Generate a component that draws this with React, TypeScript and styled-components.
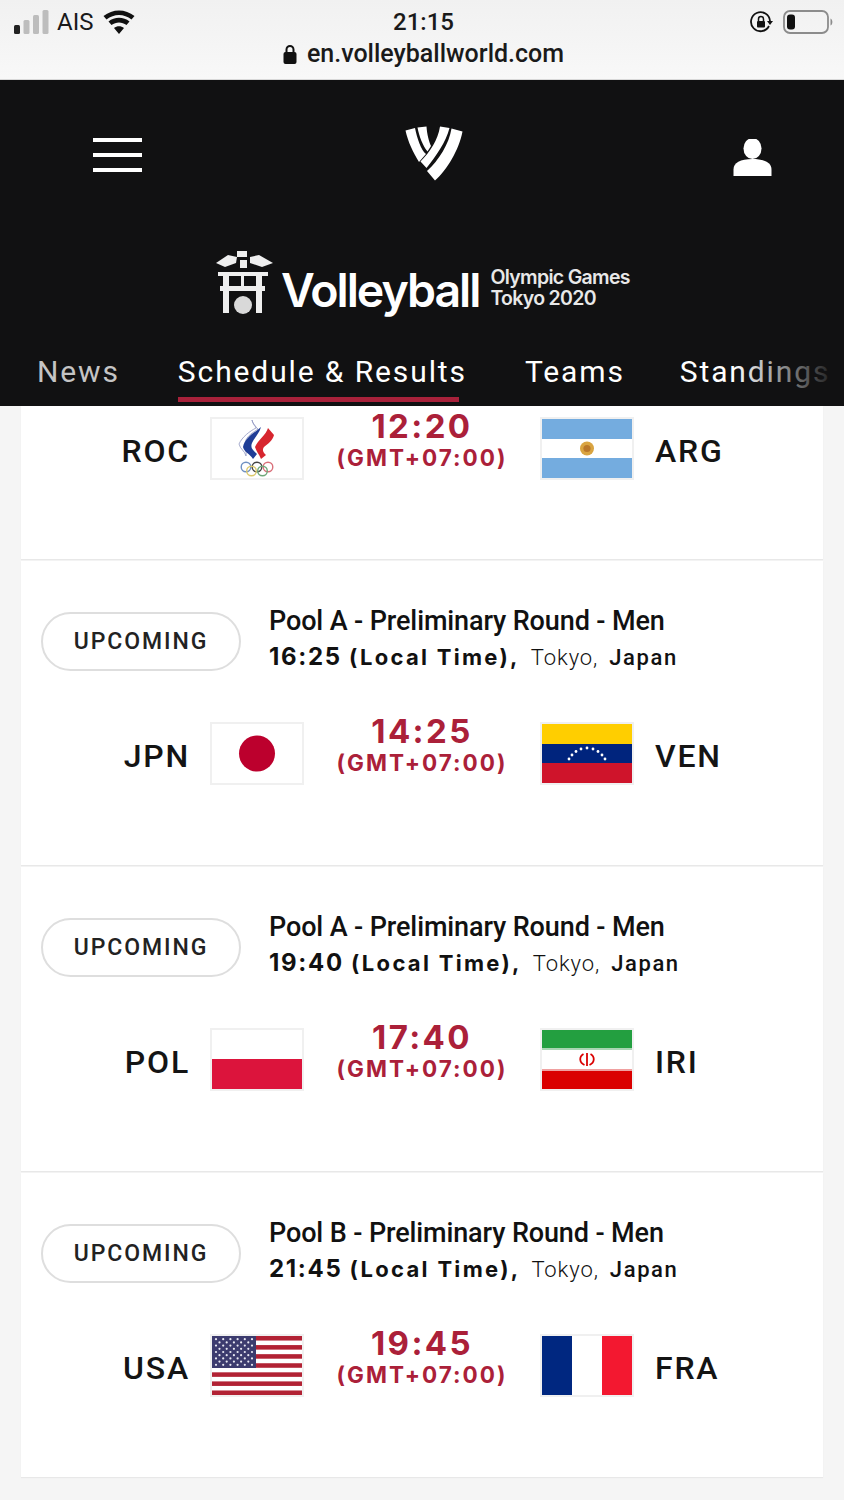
import styled, { createGlobalStyle } from 'styled-components';

const GlobalStyle = createGlobalStyle`
  html, body {
    margin: 0;
    padding: 0;
    background: #f5f5f5;
  }
  * {
    box-sizing: border-box;
  }
`;

const Page = styled.div`
  width: 844px;
  height: 1500px;
  overflow: hidden;
  background: #f5f5f5;
  font-family: Inter, "Liberation Sans", sans-serif;
`;

const StatusBar = styled.div`
  height: 80px;
  background: linear-gradient(#f1f1f1, #f8f8f8);
  border-bottom: 1px solid #d8d8d8;
  padding: 8px 11px 0 14px;
  color: #1a1a1a;
`;

const StatusRow = styled.div`
  display: grid;
  grid-template-columns: 1fr auto 1fr;
  align-items: center;
  height: 27px;
`;

const Carrier = styled.div`
  display: flex;
  align-items: center;
  gap: 8px;
  font-family: Roboto, sans-serif;
  font-size: 24px;
`;

const Clock = styled.div`
  font-family: Roboto, sans-serif;
  font-size: 24px;
  font-weight: 500;
`;

const StatusRight = styled.div`
  display: flex;
  justify-content: flex-end;
  align-items: center;
  gap: 10px;
`;

const UrlRow = styled.div`
  display: flex;
  justify-content: center;
  align-items: center;
  gap: 10px;
  margin-top: 4px;
  font-family: Roboto, sans-serif;
  font-size: 25px;
  font-weight: 500;
`;

const Header = styled.header`
  height: 326px;
  background: #111112;
  color: #fff;
  display: flex;
  flex-direction: column;
`;

const TopNav = styled.div`
  display: flex;
  justify-content: space-between;
  align-items: center;
  height: 101px;
  margin-top: 24px;
  padding: 0 72px 0 93px;
`;

const Burger = styled.div`
  width: 49px;
  display: flex;
  flex-direction: column;
  gap: 11px;
`;

const BurgerLine = styled.span`
  display: block;
  height: 4px;
  background: #fff;
`;

const LogoMark = styled.svg`
  margin-left: -6px;
`;

const UserIcon = styled.svg`
  margin-top: 6px;
`;

const Brand = styled.div`
  display: flex;
  align-items: center;
  margin-top: 40px;
  height: 75px;
  padding-left: 210px;
`;

const BrandName = styled.span`
  font-size: 46.5px;
  font-weight: 600;
  letter-spacing: -2px;
  margin: 15px 0 0 1px;
`;

const BrandSub = styled.span`
  display: flex;
  flex-direction: column;
  margin: 11px 0 0 11px;
  font-size: 19.5px;
  font-weight: 600;
  line-height: 21px;
  letter-spacing: -0.7px;
  color: #e8e8e8;
`;

const Tabs = styled.nav`
  position: relative;
  display: flex;
  gap: 58px;
  margin-top: 30px;
  padding-left: 37px;
  overflow: hidden;
  white-space: nowrap;
  flex: 1;
  &::after {
    content: '';
    position: absolute;
    top: 0;
    right: 0;
    bottom: 0;
    width: 110px;
    background: linear-gradient(to right, rgba(17, 17, 18, 0), #111112 95%);
  }
`;

const Tab = styled.div<{ $active?: boolean; $dim?: boolean }>`
  position: relative;
  font-family: Roboto, sans-serif;
  font-size: 30px;
  letter-spacing: 1.88px;
  height: 52px;
  line-height: 43px;
  color: ${p => (p.$dim ? '#c4c4c4' : '#fff')};
  &:last-child {
    margin-left: -3px;
  }
  &::after {
    content: '';
    display: ${p => (p.$active ? 'block' : 'none')};
    position: absolute;
    left: 0;
    bottom: 0;
    width: 281px;
    height: 5px;
    background: #a8213a;
  }
`;

const List = styled.main`
  display: flex;
  flex-direction: column;
  gap: 2px;
  padding: 0 21px;
`;

const Card = styled.section<{ $first?: boolean }>`
  height: ${p => (p.$first ? '153px' : '304px')};
  padding: ${p => (p.$first ? '11px 0 0' : '51px 0 0')};
  background: #fff;
  box-shadow: 0 1px 1px rgba(0, 0, 0, 0.05);
`;

const Info = styled.div`
  display: flex;
  align-items: flex-start;
  padding-left: 20px;
  margin-bottom: 46px;
`;

const Pill = styled.div`
  width: 200px;
  height: 59px;
  border: 2px solid #dedede;
  border-radius: 30px;
  display: flex;
  align-items: center;
  justify-content: center;
  font-family: Roboto, sans-serif;
  font-size: 23px;
  font-weight: 500;
  letter-spacing: 1.9px;
  color: #222;
`;

const InfoText = styled.div`
  margin: -9px 0 0 28px;
`;

const Round = styled.div`
  font-family: Roboto, sans-serif;
  font-size: 27px;
  font-weight: 500;
  line-height: 36px;
  letter-spacing: -0.12px;
  color: #111;
`;

const When = styled.div`
  display: flex;
  align-items: baseline;
  font-size: 22px;
  line-height: 36px;
  color: #111;
`;

const LocalTime = styled.b`
  font-weight: 700;
  font-size: 24px;
  letter-spacing: 1.7px;
`;

const LocalLabel = styled.b`
  font-weight: 700;
  font-size: 22px;
  letter-spacing: 2.3px;
  margin: 0 11px 0 7px;
`;

const Place = styled.span`
  font-family: Roboto, sans-serif;
  font-size: 22px;
  font-weight: 300;
  letter-spacing: 0.9px;
  margin-right: 11px;
`;

const Country = styled.span`
  font-family: Roboto, sans-serif;
  font-size: 22px;
  font-weight: 500;
  letter-spacing: 1.6px;
`;

const Match = styled.div`
  display: grid;
  grid-template-columns: 189px 94px 236px 94px 1fr;
  align-items: center;
  height: 63px;
`;

const Code = styled.div<{ $right?: boolean }>`
  font-family: Roboto, sans-serif;
  font-size: 32px;
  font-weight: 500;
  letter-spacing: 1.8px;
  color: #141414;
  text-align: ${p => (p.$right ? 'left' : 'right')};
  padding-left: ${p => (p.$right ? '21px' : '0')};
  padding-right: ${p => (p.$right ? '0' : '20px')};
  padding-top: 5px;
`;

const Flag = styled.div`
  width: 94px;
  height: 63px;
  border: 2px solid #f0f0f0;
  background: #fff;
  overflow: hidden;
`;

const FlagSvg = styled.svg`
  display: block;
  width: 100%;
  height: 100%;
`;

const Kick = styled.div`
  text-align: center;
  color: #ab2039;
  margin-top: -19px;
`;

const KickTime = styled.div`
  font-size: 33px;
  font-weight: 700;
  line-height: 36px;
  letter-spacing: 2.4px;
`;

const KickZone = styled.div`
  font-size: 22.5px;
  font-weight: 700;
  line-height: 27px;
  letter-spacing: 2px;
`;

const Russia = () => (
  <FlagSvg viewBox="0 0 90 59">
    <path d="M40 1C41 6 44 6 44 9 38 12 30 18 27 25 28 30 33 32 34 37 35 32 32 28 33 24 34 17 42 13 46 10 43 8 41 5 40 1z" fill="#fff" stroke="#8f96c0" strokeWidth="0.8" />
    <path d="M49 8C44 13 33 18 31 28 32 33 38 35 41 40L45 35C41 31 38 29 40 24 42 19 47 15 49 8z" fill="#1f3d96" />
    <path d="M62 16L56 9C54 16 46 21 43 28 44 32 47 35 49 40L54 36C51 33 50 31 52 28 56 25 61 21 62 16z" fill="#d7262f" />
    <g fill="none" strokeWidth="1.4">
      <circle cx="34" cy="48" r="4.8" stroke="#6f90c2" />
      <circle cx="45" cy="48" r="4.8" stroke="#444" />
      <circle cx="56" cy="48" r="4.8" stroke="#d9707a" />
      <circle cx="39.5" cy="52" r="4.8" stroke="#dcc96c" />
      <circle cx="50.5" cy="52" r="4.8" stroke="#6fa87a" />
    </g>
  </FlagSvg>
);

const Argentina = () => (
  <FlagSvg viewBox="0 0 90 59">
    <rect width="90" height="59" fill="#fff" />
    <rect width="90" height="20" fill="#74acdf" />
    <rect y="39" width="90" height="20" fill="#74acdf" />
    <circle cx="45" cy="29.5" r="7" fill="#d9a441" />
    <circle cx="45" cy="29.5" r="3.6" fill="#b9772a" />
  </FlagSvg>
);

const Japan = () => (
  <FlagSvg viewBox="0 0 90 59">
    <circle cx="45" cy="29.5" r="18" fill="#bc002d" />
  </FlagSvg>
);

const Venezuela = () => (
  <FlagSvg viewBox="0 0 90 59">
    <rect width="90" height="20" fill="#ffce00" />
    <rect y="20" width="90" height="20" fill="#00247d" />
    <rect y="39" width="90" height="20" fill="#cf142b" />
    <g fill="#fff">
      {[
        [27, 35], [30, 31], [34, 27.500], [39, 25], [45, 24], [51, 25], [56, 27.500], [60, 31], [63, 35],
      ].map(([cx, cy]) => (
        <circle key={cx} cx={cx} cy={cy} r="1.4" />
      ))}
    </g>
  </FlagSvg>
);

const Poland = () => (
  <FlagSvg viewBox="0 0 90 59">
    <rect y="29" width="90" height="30" fill="#dc143c" />
  </FlagSvg>
);

const Iran = () => (
  <FlagSvg viewBox="0 0 90 59">
    <rect width="90" height="18" fill="#239f40" />
    <rect y="18" width="90" height="2" fill="#a9d5b3" />
    <rect y="39" width="90" height="2" fill="#f0a0a0" />
    <rect y="41" width="90" height="18" fill="#da0000" />
    <g fill="none" stroke="#da0000" strokeWidth="1.8">
      <path d="M45 23v13" />
      <path d="M41.500 24c-4.500 2.500-4.500 8.500 1 11M48.500 24c4.500 2.500 4.500 8.500-1 11" />
    </g>
  </FlagSvg>
);

const Usa = () => (
  <FlagSvg viewBox="0 0 90 59">
    {Array.from({ length: 7 }, (_, i) => (
      <rect key={i} y={i * 9.08} width="90" height="4.54" fill="#b22234" />
    ))}
    <rect width="44" height="32" fill="#3c3b6e" />
    <g fill="#e8e8f2">
      {Array.from({ length: 9 }, (_, r) =>
        Array.from({ length: r % 2 ? 5 : 6 }, (_, c) => (
          <circle key={`${r}-${c}`} cx={(r % 2 ? 7.5 : 4) + c * 7.2} cy={3.2 + r * 3.2} r="1.1" />
        ))
      )}
    </g>
  </FlagSvg>
);

const France = () => (
  <FlagSvg viewBox="0 0 90 59">
    <rect width="30" height="59" fill="#002780" />
    <rect x="60" width="30" height="59" fill="#f31830" />
  </FlagSvg>
);

const matches = [
  { home: 'JPN', away: 'VEN', homeFlag: <Japan />, awayFlag: <Venezuela />, pool: 'A', local: '16:25', kick: '14:25' },
  { home: 'POL', away: 'IRI', homeFlag: <Poland />, awayFlag: <Iran />, pool: 'A', local: '19:40', kick: '17:40' },
  { home: 'USA', away: 'FRA', homeFlag: <Usa />, awayFlag: <France />, pool: 'B', local: '21:45', kick: '19:45' },
];

const MatchRow = (props: { home: string; away: string; homeFlag: React.ReactNode; awayFlag: React.ReactNode; kick: string }) => (
  <Match>
    <Code>{props.home}</Code>
    <Flag>{props.homeFlag}</Flag>
    <Kick>
      <KickTime>{props.kick}</KickTime>
      <KickZone>(GMT+07:00)</KickZone>
    </Kick>
    <Flag>{props.awayFlag}</Flag>
    <Code $right>{props.away}</Code>
  </Match>
);

export default function App() {
  return (
    <Page>
      <GlobalStyle />
      <StatusBar>
        <StatusRow>
          <Carrier>
            <svg width="35" height="24" viewBox="0 0 35 24">
              <rect x="0" y="15" width="6" height="9" rx="1.5" fill="#222" />
              <rect x="9.5" y="10" width="6" height="14" rx="1.5" fill="#bdbdbd" />
              <rect x="19" y="5" width="6" height="19" rx="1.5" fill="#bdbdbd" />
              <rect x="28.5" y="0" width="6" height="24" rx="1.5" fill="#bdbdbd" />
            </svg>
            <span>AIS</span>
            <svg width="32" height="24" viewBox="0 0 32 24" style={{ marginLeft: 2 }}>
              <path d="M16 24l-5-6c3-2.400 7-2.400 10 0zM8.500 15l-3-3.500c6-5 15-5 21 0l-3 3.500c-4.500-3.500-10.500-3.500-15 0zM3.500 9.500L.5 6c9-7.500 22-7.500 31 0l-3 3.500c-7.500-6-17.500-6-25 0z" fill="#111" />
            </svg>
          </Carrier>
          <Clock>21:15</Clock>
          <StatusRight>
            <svg width="24" height="24" viewBox="0 0 24 24" fill="none" stroke="#111" strokeWidth="1.800">
              <path d="M20 16a9.500 9.500 0 1 1 1-5" />
              <path d="M18 11h6l-3 4z" fill="#111" stroke="none" />
              <rect x="8" y="11" width="8" height="6.500" rx="1" fill="#111" stroke="none" />
              <path d="M9.500 11V9a2.500 2.500 0 0 1 5 0v2" strokeWidth="1.500" />
            </svg>
            <svg width="50" height="24" viewBox="0 0 50 24">
              <rect x="1" y="1" width="44" height="22" rx="6" fill="none" stroke="#8c8c8c" strokeWidth="1.800" />
              <rect x="4" y="4.500" width="8" height="15" rx="3" fill="#111" />
              <path d="M47.500 8.500c2.500 1 2.500 6 0 7z" fill="#8c8c8c" />
            </svg>
          </StatusRight>
        </StatusRow>
        <UrlRow>
          <svg width="14" height="20" viewBox="0 0 14 20">
            <path d="M3.500 9V5.500a3.500 3.500 0 0 1 7 0V9" fill="none" stroke="#111" strokeWidth="2" />
            <rect x="0.500" y="8" width="13" height="12" rx="2" fill="#111" />
          </svg>
          <span>en.volleyballworld.com</span>
        </UrlRow>
      </StatusBar>

      <Header>
        <TopNav>
          <Burger>
            <BurgerLine />
            <BurgerLine />
            <BurgerLine />
          </Burger>
          <LogoMark width="60" height="58" viewBox="10 8 60 58" fill="#fff">
            <path d="M10.500 12.500L20 10C22 20 26 32 31 36L24 44C18 34 13 24 10.500 12.500z" />
            <path d="M22.500 9.500L31.500 8.500C32 16 34 24 36 28L32.500 33.500C28 28 24 18 22.500 9.500z" />
            <path d="M45 8.500L54.500 10C51 24 41 38 31.500 50L25.500 43.500C35 34 43 22 45 8.500z" />
            <path d="M56.500 10.500L67.500 13.500C64 32 52 52 40 62.500L32 53C44 42 54 26 56.500 10.500z" />
          </LogoMark>
          <UserIcon width="39" height="38" viewBox="0 0 40 40" fill="#fff">
            <ellipse cx="20" cy="10" rx="9.500" ry="11" />
            <path d="M0 39v-7c0-7 7-11 20-11s20 4 20 11v7z" />
          </UserIcon>
        </TopNav>
        <Brand>
          <svg width="70" height="75" viewBox="0 0 70 75" fill="#eee">
            <path d="M6 18L18 10 27 12 26 18 15 22z" />
            <path d="M40 12L49 10 63 18 52 22 40 18z" />
            <path d="M27 6h10v6h-10zM30 15h7v8h-7z" />
            <rect x="8" y="27" width="50" height="4" />
            <rect x="10" y="41" width="45" height="5" />
            <rect x="13" y="27" width="6" height="41" />
            <rect x="46" y="27" width="6" height="41" />
            <rect x="31" y="31" width="3" height="10" />
            <circle cx="33" cy="60" r="9" fill="#d9d9d9" />
          </svg>
          <BrandName>Volleyball</BrandName>
          <BrandSub>
            <span>Olympic Games</span>
            <span>Tokyo 2020</span>
          </BrandSub>
        </Brand>
        <Tabs>
          <Tab $dim>News</Tab>
          <Tab $active>Schedule &amp; Results</Tab>
          <Tab>Teams</Tab>
          <Tab>Standings</Tab>
        </Tabs>
      </Header>

      <List>
        <Card $first>
          <MatchRow home="ROC" away="ARG" homeFlag={<Russia />} awayFlag={<Argentina />} kick="12:20" />
        </Card>
        {matches.map(m => (
          <Card key={m.home}>
            <Info>
              <Pill>UPCOMING</Pill>
              <InfoText>
                <Round>Pool {m.pool} - Preliminary Round - Men</Round>
                <When>
                  <LocalTime>{m.local}</LocalTime>
                  <LocalLabel>(Local Time),</LocalLabel>
                  <Place>Tokyo,</Place>
                  <Country>Japan</Country>
                </When>
              </InfoText>
            </Info>
            <MatchRow home={m.home} away={m.away} homeFlag={m.homeFlag} awayFlag={m.awayFlag} kick={m.kick} />
          </Card>
        ))}
      </List>
    </Page>
  );
}
